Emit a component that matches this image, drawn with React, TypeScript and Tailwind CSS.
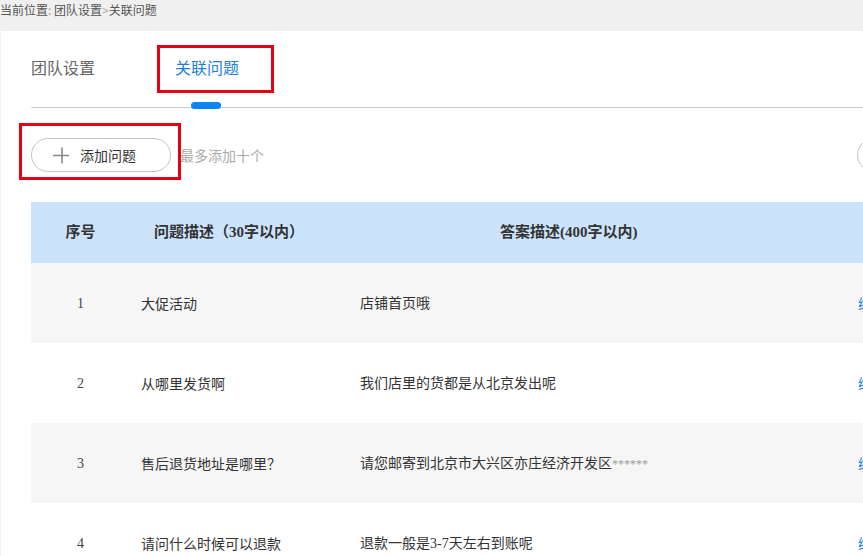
import React from "react";

const cjk = { fontFamily: '"Noto Sans CJK SC", "Noto Sans", sans-serif' };
const mixed = { fontFamily: '"Liberation Serif", "Noto Sans CJK SC", serif' };

const rows = [
  { n: "1", q: "大促活动", a: <>店铺首页哦</> },
  { n: "2", q: "从哪里发货啊", a: <>我们店里的货都是从北京发出呢</> },
  {
    n: "3",
    q: "售后退货地址是哪里？",
    a: (
      <>
        请您邮寄到北京市大兴区亦庄经济开发区<span className="text-[#999] text-[12px]">******</span>
      </>
    ),
  },
  { n: "4", q: "请问什么时候可以退款", a: <>退款一般是3-7天左右到账呢</> },
];

export default function App() {
  return (
    <div className="w-[863px] h-[556px] overflow-hidden bg-[#f0f0f0] flex flex-col" style={cjk}>
      <div className="h-[31px] shrink-0 text-[12px] leading-[20px] text-[#555] whitespace-nowrap">
        当前位置<span className="text-[#999]">:</span> 团队设置<span className="text-[#aaa]">&gt;</span>关联问题
      </div>
      <div className="flex-1 ml-[1px] bg-white pl-[30px] overflow-hidden">
        {/* tabs */}
        <div className="relative h-[77px] border-b border-[#cccccc] flex items-start pt-[24px] w-[900px]">
          <div className="text-[16px] leading-[24px] text-[#666]">团队设置</div>
          <div className="relative ml-[80px] text-[16px] leading-[24px] text-[#1f7fdc]">
            关联问题
            <div className="absolute left-[-18px] top-[-10px] w-[117px] h-[48px] border-[3px] border-[#e60012]" />
            <div className="absolute left-[16px] top-[47px] w-[30px] h-[7px] rounded-full bg-[#0a84f7]" />
          </div>
        </div>
        {/* toolbar */}
        <div className="relative pt-[30px] flex items-center w-[900px]">
          <div className="relative">
            <button className="h-[34px] w-[140px] rounded-full border border-[#c4c4c4] bg-white flex items-center pl-[20px] text-[14px] text-[#333]">
              <svg width="18" height="18" viewBox="0 0 18 18" className="mr-[10px]">
                <path d="M1 9.5 H17 M10 1.5 V17.5" stroke="#888" strokeWidth="1.6" fill="none" />
              </svg>
              添加问题
            </button>
            <div className="absolute left-[-12px] top-[-15px] w-[162px] h-[57px] border-[3px] border-[#e60012]" />
          </div>
          <span className="ml-[9px] text-[14px] text-[#aaa]">最多添加十个</span>
          <div className="absolute left-[826px] top-[30px] h-[34px] w-[100px] rounded-full border border-[#c4c4c4]" />
        </div>
        {/* table */}
        <div className="mt-[30px] w-[916px]">
          <div className="grid grid-cols-[99px_219px_498px_100px] h-[61px] items-center bg-[#cbe4fc] text-[15px] font-bold text-[#333]" style={mixed}>
            <div className="text-center">序号</div>
            <div className="pl-[24px] whitespace-nowrap">问题描述（30字以内）</div>
            <div className="pl-[151px] whitespace-nowrap">答案描述(400字以内)</div>
            <div />
          </div>
          {rows.map((r, i) => (
            <div
              key={r.n}
              className={`grid grid-cols-[99px_219px_498px_100px] h-[80px] items-center text-[14px] text-[#333] ${
                i % 2 === 0 ? "bg-[#f6f6f6]" : "bg-white"
              }`}
            >
              <div className="text-center text-[#444]" style={mixed}>{r.n}</div>
              <div className="pl-[11px] whitespace-nowrap">{r.q}</div>
              <div className="pl-[11px] whitespace-nowrap" style={mixed}>{r.a}</div>
              <div className="pl-[11px] text-[#1f7fdc] whitespace-nowrap">编辑</div>
            </div>
          ))}
        </div>
      </div>
    </div>
  );
}
